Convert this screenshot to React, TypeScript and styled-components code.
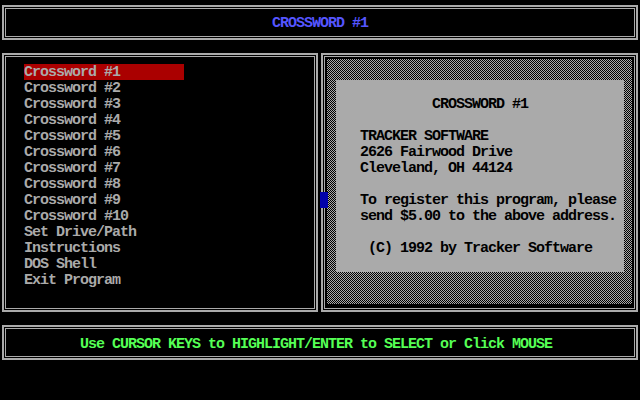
import React from "react";
import styled, { createGlobalStyle } from "styled-components";

const GlobalStyle = createGlobalStyle`
  html, body {
    margin: 0;
    padding: 0;
    background: #000;
  }
`;

const Screen = styled.div`
  width: 640px;
  height: 400px;
  box-sizing: border-box;
  padding: 5px 2px 0 2px;
  display: flex;
  flex-direction: column;
  gap: 13px;
  background: #000;
  font-family: "Liberation Mono", "DejaVu Sans Mono", monospace;
  font-weight: bold;
  font-size: 15px;
  letter-spacing: -1px;
  line-height: 18px;
`;

const Frame = styled.div`
  box-sizing: border-box;
  border: 2px solid #aaaaaa;
  box-shadow: inset 0 0 0 1px #000, inset 0 0 0 2px #aaaaaa;
  background: #000;
`;

const Bar = styled(Frame)<{ $color: string; $shift?: number; $down?: number }>`
  height: 35px;
  display: flex;
  align-items: center;
  justify-content: center;
  color: ${(p) => p.$color};
  padding-right: ${(p) => (p.$shift ? `${p.$shift}px` : "0")};
  padding-top: ${(p) => (p.$down ? `${p.$down}px` : "0")};
  white-space: pre;
`;

const Panels = styled.div`
  position: relative;
  display: grid;
  grid-template-columns: 316px 317px;
  column-gap: 3px;
  height: 259px;
`;

const MenuPanel = styled(Frame)`
  padding: 9px 0 0 20px;
  display: flex;
  flex-direction: column;
`;

const MenuItem = styled.div<{ $active?: boolean }>`
  width: 160px;
  height: 16px;
  color: #aaaaaa;
  background: ${(p) => (p.$active ? "#aa0000" : "transparent")};
  white-space: pre;
`;

const InfoPanel = styled(Frame)`
  padding: 4px 4px 6px 4px;
  display: flex;
`;

const Checker = styled.div`
  flex: 1;
  display: flex;
  padding: 21px 8px 32px 9px;
  background: repeating-conic-gradient(#aaaaaa 0 25%, #000 0 50%) 0 0 / 2px 2px;
`;

const InfoCard = styled.div`
  flex: 1;
  background: #aaaaaa;
  color: #000;
  padding: 16px 0 0 24px;
  display: flex;
  flex-direction: column;
`;

const Line = styled.div`
  height: 16px;
  white-space: pre;
`;

const CursorBlock = styled.div`
  position: absolute;
  left: 318px;
  top: 139px;
  width: 8px;
  height: 16px;
  background: #0000aa;
`;

const menu = [
  "Crossword #1",
  "Crossword #2",
  "Crossword #3",
  "Crossword #4",
  "Crossword #5",
  "Crossword #6",
  "Crossword #7",
  "Crossword #8",
  "Crossword #9",
  "Crossword #10",
  "Set Drive/Path",
  "Instructions",
  "DOS Shell",
  "Exit Program",
];

const info = [
  "         CROSSWORD #1",
  "",
  "TRACKER SOFTWARE",
  "2626 Fairwood Drive",
  "Cleveland, OH 44124",
  "",
  "To register this program, please",
  "send $5.00 to the above address.",
  "",
  " (C) 1992 by Tracker Software",
];

export default function App() {
  return (
    <>
      <GlobalStyle />
      <Screen>
        <Bar $color="#5555ff" $down={2}>
          CROSSWORD #1
        </Bar>
        <Panels>
          <MenuPanel>
            {menu.map((m, i) => (
              <MenuItem key={m} $active={i === 0}>
                {m}
              </MenuItem>
            ))}
          </MenuPanel>
          <InfoPanel>
            <Checker>
              <InfoCard>
                {info.map((l, i) => (
                  <Line key={i}>{l}</Line>
                ))}
              </InfoCard>
            </Checker>
          </InfoPanel>
          <CursorBlock />
        </Panels>
        <Bar $color="#55ff55" $shift={8} $down={4}>
          Use CURSOR KEYS to HIGHLIGHT/ENTER to SELECT or Click MOUSE
        </Bar>
      </Screen>
    </>
  );
}
